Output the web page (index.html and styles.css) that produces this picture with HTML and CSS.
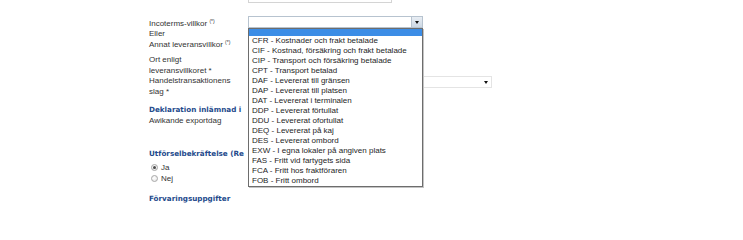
FILE: index.html
```html
<!DOCTYPE html>
<html lang="sv">
<head>
<meta charset="utf-8">
<title>Incoterms</title>
<link rel="stylesheet" href="styles.css">
</head>
<body>
<div class="page">
  <div class="top-field"></div>

  <div class="row row-incoterms">
    <div class="label">Incoterms-villkor <sup>(*)</sup></div>
    <div class="select-wrap">
      <div class="select">
        <span class="select-btn"><span class="tri"></span></span>
      </div>
      <ul class="dropdown">
        <li class="empty selected"></li>
        <li>CFR - Kostnader och frakt betalade</li>
        <li>CIF - Kostnad, försäkring och frakt betalade</li>
        <li>CIP - Transport och försäkring betalade</li>
        <li>CPT - Transport betalad</li>
        <li>DAF - Levererat till gränsen</li>
        <li>DAP - Levererat till platsen</li>
        <li>DAT - Levererat i terminalen</li>
        <li>DDP - Levererat förtullat</li>
        <li>DDU - Levererat ofortullat</li>
        <li>DEQ - Levererat på kaj</li>
        <li>DES - Levererat ombord</li>
        <li>EXW - I egna lokaler på angiven plats</li>
        <li>FAS - Fritt vid fartygets sida</li>
        <li>FCA - Fritt hos fraktföraren</li>
        <li>FOB - Fritt ombord</li>
      </ul>
    </div>
  </div>

  <div class="label line eller">Eller</div>
  <div class="label line">Annat leveransvillkor <sup>(*)</sup></div>

  <div class="label multi ort">Ort enligt<br>leveransvillkoret *</div>

  <div class="row">
    <div class="label multi">Handelstransaktionens<br>slag *</div>
    <div class="select wide"><span class="tri"></span></div>
  </div>

  <h2 class="heading first">Deklaration inlämnad i</h2>
  <div class="label line">Awikande exportdag</div>

  <h2 class="heading second">Utförselbekräftelse (Re</h2>
  <div class="radio-row first-radio"><span class="radio checked"></span>Ja</div>
  <div class="radio-row"><span class="radio"></span>Nej</div>

  <h2 class="heading third">Förvaringsuppgifter</h2>
</div>
</body>
</html>
```

FILE: styles.css
```css
html, body {
  margin: 0;
  padding: 0;
  background: #ffffff;
}

body {
  font-family: "Liberation Sans", Arial, sans-serif;
  font-size: 8px;
  color: #333333;
  width: 743px;
  height: 206px;
  overflow: hidden;
}

.page {
  padding-left: 149px;
}

.top-field {
  margin-left: 99px;
  width: 144px;
  height: 3px;
  box-sizing: border-box;
  border: 1px solid #d4d4d4;
  border-top: none;
}

.row {
  display: flex;
  align-items: flex-start;
}

.row-incoterms {
  margin-top: 13px;
}

.label {
  width: 99px;
  flex: none;
  white-space: nowrap;
}

.row-incoterms .label {
  padding-top: 3px;
  line-height: 10px;
}

.label sup {
  font-size: 5px;
  vertical-align: 3px;
  line-height: 0;
}

.line {
  line-height: 10px;
  margin-top: 1px;
}

.line.eller {
  margin-top: 0;
}

.multi {
  line-height: 10.5px;
}

.ort {
  margin-top: 5px;
}

.select-wrap {
  position: relative;
  width: 175px;
}

.select {
  box-sizing: border-box;
  width: 175px;
  height: 12px;
  border: 1px solid #b7c3cf;
  background: #ffffff;
  display: flex;
  justify-content: flex-end;
  align-items: stretch;
}

.select-btn {
  width: 10px;
  background: linear-gradient(#e9eef4, #cdd8e4);
  border-left: 1px solid #b7c3cf;
  display: flex;
  align-items: center;
  justify-content: center;
}

.tri {
  width: 0;
  height: 0;
  border-left: 2.5px solid transparent;
  border-right: 2.5px solid transparent;
  border-top: 3px solid #111111;
}

.select.wide {
  width: 244px;
  border-color: #e4e4e4;
  align-items: center;
  padding-right: 3px;
}

.dropdown {
  position: absolute;
  top: 12px;
  left: 0;
  margin: 0;
  padding: 0;
  list-style: none;
  box-sizing: border-box;
  width: 175px;
  border: 1px solid #6d6d6d;
  background: #ffffff;
  box-shadow: 1px 1px 0 #c4c4c4;
  z-index: 5;
  color: #1e1e1e;
}

.dropdown li {
  height: 10px;
  line-height: 10px;
  padding-left: 3px;
  white-space: nowrap;
}

.dropdown li.empty {
  height: 7px;
}

.dropdown li.selected {
  background: #3c8de6;
}

.heading {
  margin: 0;
  width: 99px;
  overflow: hidden;
  font-family: "DejaVu Sans", Verdana, sans-serif;
  font-weight: bold;
  font-size: 7.2px;
  line-height: 11px;
  color: #244a8c;
  white-space: nowrap;
}

.heading.first {
  margin-top: 7px;
}

.heading.second {
  margin-top: 22px;
}

.heading.third {
  margin-top: 9px;
}

.radio-row {
  display: flex;
  align-items: center;
  line-height: 11px;
  height: 11px;
}

.first-radio {
  margin-top: 3px;
}

.radio {
  box-sizing: border-box;
  width: 7px;
  height: 7px;
  border-radius: 50%;
  border: 1px solid #a8a8a8;
  background: radial-gradient(circle at 40% 40%, #ffffff, #e2e2e2);
  margin-left: 2px;
  margin-right: 3px;
  display: flex;
  align-items: center;
  justify-content: center;
}

.radio.checked::after {
  content: "";
  width: 3px;
  height: 3px;
  border-radius: 50%;
  background: #4a4a4a;
}
```
